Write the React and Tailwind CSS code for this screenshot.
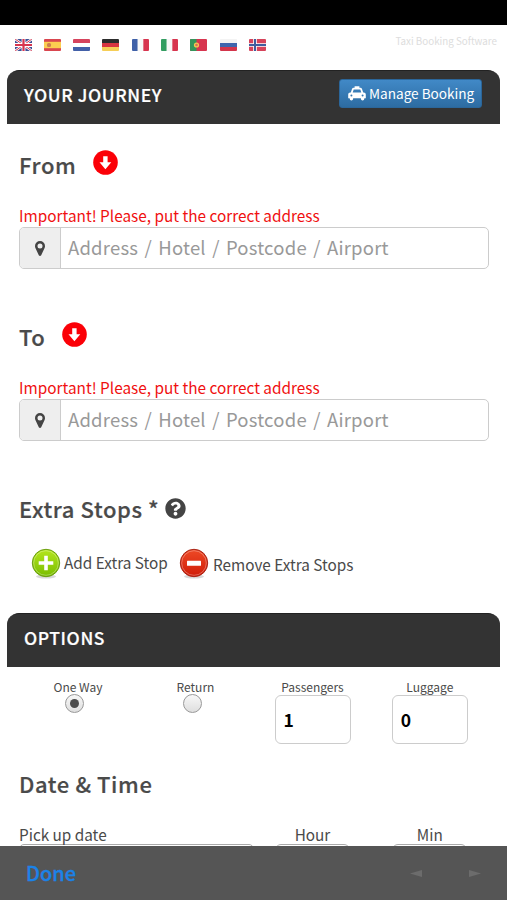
import React from "react";
import { FaQuestionCircle } from "react-icons/fa";

function Flag({ children }) {
  return (
    <svg width="17" height="12" viewBox="0 0 17 12" className="block overflow-hidden rounded-[1px] opacity-90">
      {children}
    </svg>
  );
}

const Bands = ({ colors, vertical }) =>
  colors.map((c, i) =>
    vertical ? (
      <rect key={i} x={(i * 17) / 3} y="0" width="5.8" height="12" fill={c} />
    ) : (
      <rect key={i} x="0" y={i * 4} width="17" height="4.1" fill={c} />
    )
  );

function Flags() {
  return (
    <div className="flex gap-[12.3px] pl-[14.5px] pt-[14px]">
      <Flag>
        <rect width="17" height="12" fill="#2b3f8c" />
        <path d="M0 0L17 12M17 0L0 12" stroke="#fff" strokeWidth="2.4" />
        <path d="M0 0L17 12M17 0L0 12" stroke="#d3203c" strokeWidth="1" />
        <path d="M8.5 0V12M0 6H17" stroke="#fff" strokeWidth="3.8" />
        <path d="M8.5 0V12M0 6H17" stroke="#d3203c" strokeWidth="2.2" />
      </Flag>
      <Flag>
        <rect width="17" height="12" fill="#d5333c" />
        <rect y="2.8" width="17" height="6.4" fill="#fcc93e" />
        <rect x="3" y="4" width="4" height="4" rx="1.5" fill="#c8743a" />
      </Flag>
      <Flag><Bands colors={["#d2304c", "#ffffff", "#2f4f9f"]} /></Flag>
      <Flag><Bands colors={["#161616", "#d31f2c", "#f6c945"]} /></Flag>
      <Flag><Bands vertical colors={["#2b509f", "#f7f7f7", "#d3203c"]} /></Flag>
      <Flag><Bands vertical colors={["#1d9350", "#f7f7f7", "#d3203c"]} /></Flag>
      <Flag>
        <rect width="17" height="12" fill="#d3203c" />
        <rect width="6.5" height="12" fill="#1d8a4a" />
        <circle cx="6.5" cy="6" r="2.6" fill="#f2c53d" />
        <circle cx="6.5" cy="6" r="1.3" fill="#d85a50" />
      </Flag>
      <Flag><Bands colors={["#f2f2f2", "#2b55a5", "#cf2038"]} /></Flag>
      <Flag>
        <rect width="17" height="12" fill="#d22f49" />
        <path d="M6 0V12M0 6H17" stroke="#fff" strokeWidth="3.6" />
        <path d="M6 0V12M0 6H17" stroke="#2b4c94" strokeWidth="2" />
      </Flag>
    </div>
  );
}

function TaxiIcon() {
  return (
    <svg width="18" height="15" viewBox="0 0 18 15" className="block shrink-0">
      <path
        fillRule="evenodd"
        fill="#fff"
        d="M6.6 0.3h4.8v1.5h1c.8 0 1.3.4 1.6 1.2l1.2 3.5h.5c1.2 0 2.1.9 2.1 2.1v3.6h-1.5v.6a1.7 1.7 0 0 1-3.4 0v-.6H5.1v.6a1.7 1.7 0 0 1-3.4 0v-.6H.2V8.6c0-1.2.9-2.1 2.1-2.1h.5L4 3c.3-.8.8-1.2 1.6-1.2h1zM5.7 3.5L4.7 6.5h8.6l-1-3zM3.4 8.4a1 1 0 1 0 0 2 1 1 0 0 0 0-2zM14.6 8.4a1 1 0 1 0 0 2 1 1 0 0 0 0-2z"
      />
    </svg>
  );
}

function DownIcon() {
  return (
    <svg width="25" height="25" viewBox="0 0 25 25" className="block">
      <circle cx="12.5" cy="12.5" r="12.3" fill="#fb0007" />
      <path d="M10.2 6.3h4.4v5.9h3.7l-5.9 7-5.9-7h3.7z" fill="#fff" />
    </svg>
  );
}

function PinIcon() {
  return (
    <svg width="10" height="15" viewBox="0 0 10 15" className="block">
      <path
        fillRule="evenodd"
        fill="#444"
        d="M5 0a5 5 0 0 1 5 5c0 .8-.1 1.4-.4 1.9L6.2 14.2c-.5 1-1.9 1-2.4 0L.4 6.9C.1 6.4 0 5.8 0 5a5 5 0 0 1 5-5zm0 2.5a2.5 2.5 0 1 0 0 5 2.5 2.5 0 0 0 0-5z"
      />
    </svg>
  );
}

function RoundIcon({ id, light, dark, edge, plus }) {
  return (
    <svg width="30" height="32" viewBox="0 0 30 32" className="block shrink-0">
      <defs>
        <linearGradient id={id} x1="0" y1="0" x2="0" y2="1">
          <stop offset="0" stopColor={light} />
          <stop offset="1" stopColor={dark} />
        </linearGradient>
      </defs>
      <ellipse cx="15" cy="28.5" rx="10" ry="2" fill="#000" opacity="0.15" />
      <circle cx="15" cy="15" r="13.7" fill={`url(#${id})`} stroke={edge} strokeWidth="1" />
      <circle cx="15" cy="15" r="12.3" fill="none" stroke="#fff" strokeWidth="1" opacity="0.3" />
      {plus ? (
        <path d="M13.2 7.7h3.6v5.5h5.5v3.6h-5.5v5.5h-3.6v-5.5H7.7v-3.6h5.5z" fill="#fff" />
      ) : (
        <rect x="8" y="12.7" width="14" height="5" rx="0.5" fill="#fff" />
      )}
    </svg>
  );
}

function SectionBar({ title, children }) {
  return (
    <div className="mx-[7px] flex h-[54px] items-start justify-between rounded-t-[12px] border-t border-[#222] bg-[#333] pl-[17px] pr-[18px]">
      <h2 className="mt-[11px] text-[17.5px] font-medium leading-[26px] tracking-[0.6px] text-white [-webkit-text-stroke:0.2px_white]">
        {title}
      </h2>
      {children}
    </div>
  );
}

function Heading({ children }) {
  return (
    <h3 className="text-[22px] font-medium leading-[28px] tracking-[0.6px] [-webkit-text-stroke:0.2px_#4a4a4a]">
      {children}
    </h3>
  );
}

function AddressBlock({ label }) {
  return (
    <section className="h-[172.3px] px-[19px] pt-[26px]">
      <div className="flex h-[32px] gap-[17px]">
        <Heading>{label}</Heading>
        <DownIcon />
      </div>
      <p className="mt-[24px] h-[21px] whitespace-nowrap text-[15.35px] leading-[19.5px] text-[#f01010]">
        Important! Please, put the correct address
      </p>
      <div className="flex h-[42px] w-[470px] overflow-hidden rounded-[5px] border border-[#ccc] bg-white">
        <div className="flex w-[41px] items-center justify-center border-r border-[#ccc] bg-[#eee]">
          <PinIcon />
        </div>
        <div className="whitespace-nowrap pl-[7px] text-[18.5px] leading-[39px] tracking-[0.2px] text-[#999] [word-spacing:2px]">
          Address / Hotel / Postcode / Airport
        </div>
      </div>
    </section>
  );
}

function Radio({ label, checked }) {
  return (
    <div className="flex w-[117.5px] shrink-0 flex-col pl-[34px]">
      <span className="flex w-[50px] justify-center whitespace-nowrap text-[12px] leading-[15px]">{label}</span>
      <span className="ml-[12px] flex size-[19px] items-center justify-center rounded-full border border-[#999] bg-linear-to-b from-[#f8f8f8] to-[#dedede]">
        {checked && <span className="size-[9px] rounded-full bg-[#4c4c4c]" />}
      </span>
    </div>
  );
}

function Counter({ label, value }) {
  return (
    <div className="w-[117.3px] shrink-0">
      <div className="flex w-[76px] flex-col items-center">
        <span className="h-[16px] text-[12px] leading-[15px]">{label}</span>
        <div className="h-[49px] w-[76px] rounded-[6px] border border-[#ccc] pl-[8px] text-[17.5px] font-bold leading-[48px] text-black">
          {value}
        </div>
      </div>
    </div>
  );
}

export default function App() {
  return (
    <div className="relative h-[900px] w-[507px] overflow-hidden bg-white font-['Noto_Sans_CJK_SC',sans-serif] text-[#4a4a4a]">
      <div className="h-[25px] bg-black" />
      <header className="flex h-[45px] justify-between pr-[10px]">
        <Flags />
        <span className="mt-[8px] text-[9.8px] leading-[16px] text-[#ddd]">Taxi Booking Software</span>
      </header>

      <SectionBar title="YOUR JOURNEY">
        <button className="mt-[8px] flex h-[29px] w-[143px] items-center gap-[3px] rounded-[3px] border border-[#2b669a] bg-linear-to-b from-[#4189c7] to-[#2d6ca2] pl-[8px] text-[13.6px] text-white">
          <TaxiIcon />
          <span className="-mt-px whitespace-nowrap leading-[26px]">Manage Booking</span>
        </button>
      </SectionBar>

      <AddressBlock label="From" />
      <AddressBlock label="To" />

      <section className="h-[144.4px] px-[19px] pt-[25px]">
        <div className="flex h-[32px] gap-[6px]">
          <Heading>Extra Stops *</Heading>
          <FaQuestionCircle className="mt-[4px] size-[21px] text-[#444]" />
        </div>
        <div className="mt-[22px] flex pl-[12px] text-[15.3px] leading-[24px]">
          <RoundIcon id="add" light="#b5e61d" dark="#79bd00" edge="#6b9d12" plus />
          <span className="ml-[3px] mt-[2px] w-[115px] whitespace-nowrap">Add Extra Stop</span>
          <RoundIcon id="remove" light="#ee4a26" dark="#d01c08" edge="#a82416" />
          <span className="ml-[4px] mt-[4px]">Remove Extra Stops</span>
        </div>
      </section>

      <SectionBar title="OPTIONS" />

      <div className="flex h-[97px] pl-[19px] pt-[12px]">
        <Radio label="One Way" checked />
        <Radio label="Return" />
        <div className="flex shrink-0 pl-[20.5px]">
          <Counter label="Passengers" value="1" />
          <Counter label="Luggage" value="0" />
        </div>
      </div>

      <section className="px-[19px] pt-[5px]">
        <Heading>Date &amp; Time</Heading>
        <div className="mt-[27px] flex text-[15.3px] leading-[20px]">
          <div className="w-[256px]">
            Pick up date
            <div className="h-[40px] w-[235px] rounded-[5px] border border-[#aaa]" />
          </div>
          <div className="w-[117.3px]">
            <div className="w-[75px] text-center">Hour</div>
            <div className="h-[40px] w-[75px] rounded-[6px] border border-[#aaa]" />
          </div>
          <div>
            <div className="w-[75px] text-center">Min</div>
            <div className="h-[40px] w-[75px] rounded-[6px] border border-[#aaa]" />
          </div>
        </div>
      </section>

      <div className="absolute inset-x-0 bottom-0 flex h-[54px] items-center justify-between bg-[#555] pl-[26px] pr-[26px]">
        <span className="text-[20px] font-medium text-[#1b82e8] [-webkit-text-stroke:0.3px_#1b82e8]">Done</span>
        <span className="flex gap-[47px]">
          <svg width="12" height="7" viewBox="0 0 12 7"><path d="M0 3.5L12 0V7z" fill="#6c6c6c" /></svg>
          <svg width="12" height="7" viewBox="0 0 12 7"><path d="M12 3.5L0 0V7z" fill="#6c6c6c" /></svg>
        </span>
      </div>
    </div>
  );
}
